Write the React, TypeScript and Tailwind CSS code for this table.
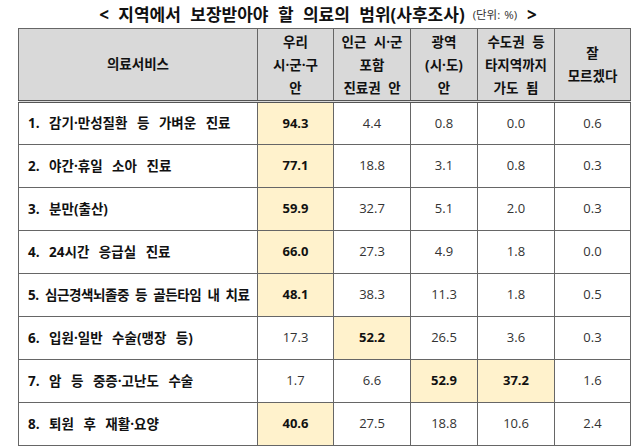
const rows: { label: string; values: string[]; hi: number[]; tight?: boolean }[] = [
  { label: '1. 감기·만성질환 등 가벼운 진료', values: ['94.3', '4.4', '0.8', '0.0', '0.6'], hi: [0] },
  { label: '2. 야간·휴일 소아 진료', values: ['77.1', '18.8', '3.1', '0.8', '0.3'], hi: [0] },
  { label: '3. 분만(출산)', values: ['59.9', '32.7', '5.1', '2.0', '0.3'], hi: [0] },
  { label: '4. 24시간 응급실 진료', values: ['66.0', '27.3', '4.9', '1.8', '0.0'], hi: [0] },
  { label: '5. 심근경색뇌졸중 등 골든타임 내 치료', values: ['48.1', '38.3', '11.3', '1.8', '0.5'], hi: [0], tight: true },
  { label: '6. 입원·일반 수술(맹장 등)', values: ['17.3', '52.2', '26.5', '3.6', '0.3'], hi: [1] },
  { label: '7. 암 등 중증·고난도 수술', values: ['1.7', '6.6', '52.9', '37.2', '1.6'], hi: [2, 3] },
  { label: '8. 퇴원 후 재활·요양', values: ['40.6', '27.5', '18.8', '10.6', '2.4'], hi: [0] },
]

const headers = [
  ['우리', '시·군·구', '안'],
  ['인근 시·군', '포함', '진료권 안'],
  ['광역', '(시·도)', '안'],
  ['수도권 등', '타지역까지', '가도 됨'],
  ['잘', '모르겠다'],
]

const widths = ['w-[239px]', 'w-[76px]', 'w-[77px]', 'w-[67px]', 'w-[77px]', 'w-[76px]']

export default function App() {
  return (
    <div className="w-[640px] h-[447px] bg-white font-['Open_Sans','Noto_Sans_CJK_KR',sans-serif] text-[#111]">
      <div className="h-[28px] flex items-center justify-center pr-[4px] pt-[2px] [word-spacing:5px]">
        <span className="text-[17px] font-bold">&lt; 지역에서 보장받아야 할 의료의 범위(사후조사)</span>
        <span className="text-[11.5px] ml-[8px] text-[#333] [word-spacing:1px]">(단위: %)</span>
        <span className="text-[17px] font-bold ml-[10px]">&gt;</span>
      </div>
      <div className="ml-[18px] w-[613px]">
        <table className="w-[613px] table-fixed border-collapse border border-[#555] text-[13px]">
          <colgroup>
            {widths.map((w, i) => (
              <col key={i} className={w} />
            ))}
          </colgroup>
          <thead>
            <tr className="h-[73px] bg-[#d9d9d9] border-b-[3px] border-double border-[#555] text-[13.5px] [word-spacing:4px]">
              <th className="border border-[#666] font-bold text-center align-middle">의료서비스</th>
              {headers.map((h, i) => (
                <th key={i} className="border border-[#666] font-bold text-center align-middle leading-[23px] pt-[1px] whitespace-nowrap">
                  {h.map((l, j) => (
                    <div key={j}>{l}</div>
                  ))}
                </th>
              ))}
            </tr>
          </thead>
          <tbody>
            {rows.map((r, i) => (
              <tr key={i} className="h-[43px]">
                <td
                  className={
                    r.tight
                      ? 'border border-[#666] pl-[9px] font-bold whitespace-nowrap text-[13.5px] tracking-[-0.4px] [word-spacing:3px]'
                      : 'border border-[#666] pl-[9px] font-bold whitespace-nowrap text-[13.5px] [word-spacing:6px]'
                  }
                >
                  {r.label}
                </td>
                {r.values.map((v, j) => (
                  <td
                    key={j}
                    className={
                      r.hi.includes(j)
                        ? 'border border-[#666] text-center bg-[#fff2cc] font-bold'
                        : 'border border-[#666] text-center text-[#333]'
                    }
                  >
                    {v}
                  </td>
                ))}
              </tr>
            ))}
          </tbody>
        </table>
      </div>
    </div>
  )
}
